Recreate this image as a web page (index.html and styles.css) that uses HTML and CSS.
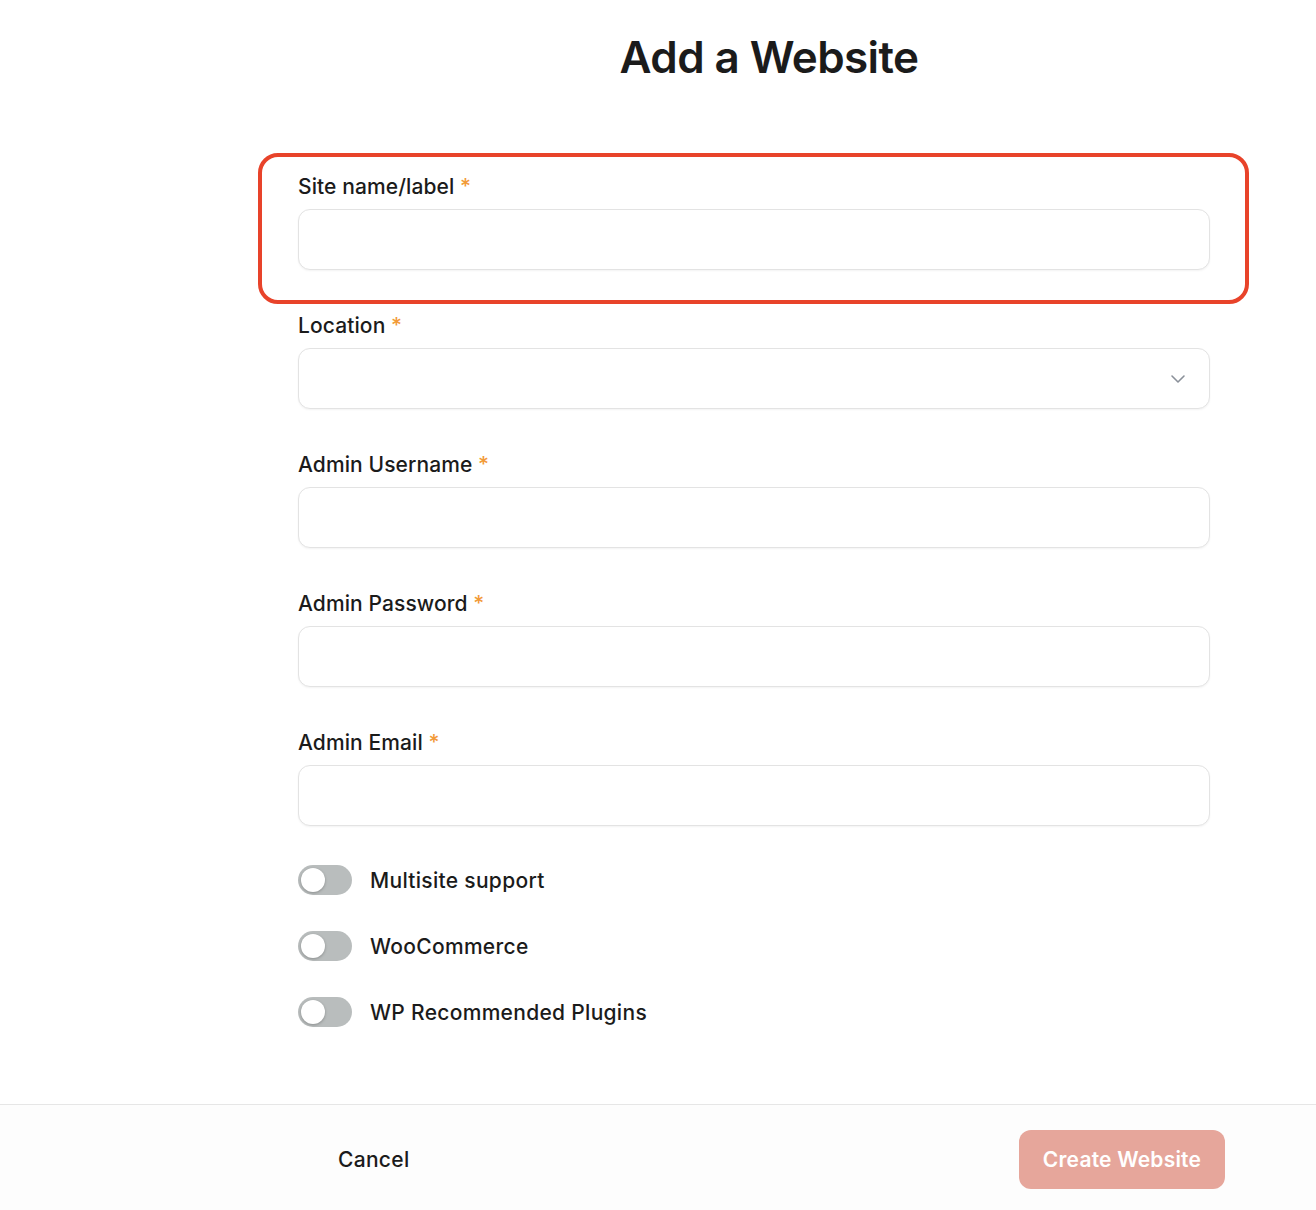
FILE: index.html
```html
<!DOCTYPE html>
<html lang="en">
<head>
<meta charset="utf-8">
<title>Add a Website</title>
<link rel="stylesheet" href="styles.css">
</head>
<body>
<div class="page">
  <main class="content">
    <h1 class="title">Add a Website</h1>
    <form class="form">
      <div class="field field-highlight">
        <label class="label">Site name/label <span class="req">*</span></label>
        <div class="input"></div>
      </div>
      <div class="field">
        <label class="label">Location <span class="req">*</span></label>
        <div class="input select">
          <svg class="chev" width="16" height="10" viewBox="0 0 16 10"><path d="M2 2l6 6 6-6" fill="none" stroke="#8a9099" stroke-width="1.6" stroke-linecap="round" stroke-linejoin="round"/></svg>
        </div>
      </div>
      <div class="field">
        <label class="label">Admin Username <span class="req">*</span></label>
        <div class="input"></div>
      </div>
      <div class="field">
        <label class="label">Admin Password <span class="req">*</span></label>
        <div class="input"></div>
      </div>
      <div class="field">
        <label class="label">Admin Email <span class="req">*</span></label>
        <div class="input"></div>
      </div>
      <div class="toggles">
        <div class="toggle-row"><span class="toggle"><span class="knob"></span></span><span class="toggle-label">Multisite support</span></div>
        <div class="toggle-row"><span class="toggle"><span class="knob"></span></span><span class="toggle-label">WooCommerce</span></div>
        <div class="toggle-row"><span class="toggle"><span class="knob"></span></span><span class="toggle-label">WP Recommended Plugins</span></div>
      </div>
    </form>
  </main>
  <footer class="footer">
    <button class="btn-cancel" type="button">Cancel</button>
    <button class="btn-create" type="button">Create Website</button>
  </footer>
</div>
</body>
</html>
```

FILE: styles.css
```css
* { box-sizing: border-box; }
html, body { margin: 0; padding: 0; background: #ffffff; }
body {
  font-family: Inter, "Noto Sans", "Liberation Sans", sans-serif;
  color: #1b1b1b;
}
.page {
  width: 1316px;
  height: 1210px;
  display: flex;
  flex-direction: column;
}
.content {
  flex: 1;
  display: flex;
  flex-direction: column;
}
.title {
  margin: 30px 0 0 0;
  padding-left: 222px;
  text-align: center;
  font-size: 44px;
  font-weight: 600;
  letter-spacing: -0.6px;
  line-height: 54px;
  color: #1b1b1b;
}
.form {
  margin: 91px 0 0 298px;
  width: 912px;
  display: flex;
  flex-direction: column;
}
.field {
  display: flex;
  flex-direction: column;
  gap: 10px;
  margin-bottom: 44px;
  position: relative;
}
.field-highlight::after {
  content: "";
  position: absolute;
  top: -22px;
  left: -40px;
  right: -39px;
  bottom: -34px;
  border: 4px solid #e8432a;
  border-radius: 20px;
  pointer-events: none;
}
.label {
  font-size: 21px;
  font-weight: 500;
  line-height: 24px;
  letter-spacing: 0.1px;
  color: #1b1b1b;
}
.req {
  color: #f29a38;
}
.input {
  height: 61px;
  border: 1px solid #e3e3e3;
  border-radius: 12px;
  background: #fff;
  box-shadow: 0 1px 2px rgba(0,0,0,0.05);
}
.select {
  display: flex;
  align-items: center;
  justify-content: flex-end;
  padding-right: 23px;
}
.toggles {
  margin-top: -5px;
  display: flex;
  flex-direction: column;
  gap: 36px;
}
.toggle-row {
  display: flex;
  align-items: center;
  gap: 18px;
  height: 30px;
}
.toggle {
  width: 54px;
  height: 30px;
  border-radius: 15px;
  background: #b9bdbd;
  position: relative;
  flex: none;
}
.knob {
  position: absolute;
  top: 3px;
  left: 3px;
  width: 24px;
  height: 24px;
  border-radius: 50%;
  background: #fff;
  box-shadow: 0 1px 3px rgba(0,0,0,0.25);
}
.toggle-label {
  font-size: 21px;
  font-weight: 500;
  letter-spacing: 0.3px;
  color: #1b1b1b;
}
.footer {
  height: 106px;
  border-top: 1px solid #e6e6e6;
  background: #fdfdfd;
  display: flex;
  align-items: center;
  justify-content: space-between;
  padding: 4px 91px 0 338px;
}
.btn-cancel {
  border: none;
  background: transparent;
  padding: 0;
  font-family: inherit;
  font-size: 21px;
  font-weight: 500;
  letter-spacing: 0.3px;
  color: #1b1b1b;
}
.btn-create {
  width: 206px;
  height: 59px;
  border: none;
  border-radius: 12px;
  background: #e6a69b;
  color: #fff;
  font-family: inherit;
  font-size: 21px;
  font-weight: 600;
  letter-spacing: 0.2px;
}
```
